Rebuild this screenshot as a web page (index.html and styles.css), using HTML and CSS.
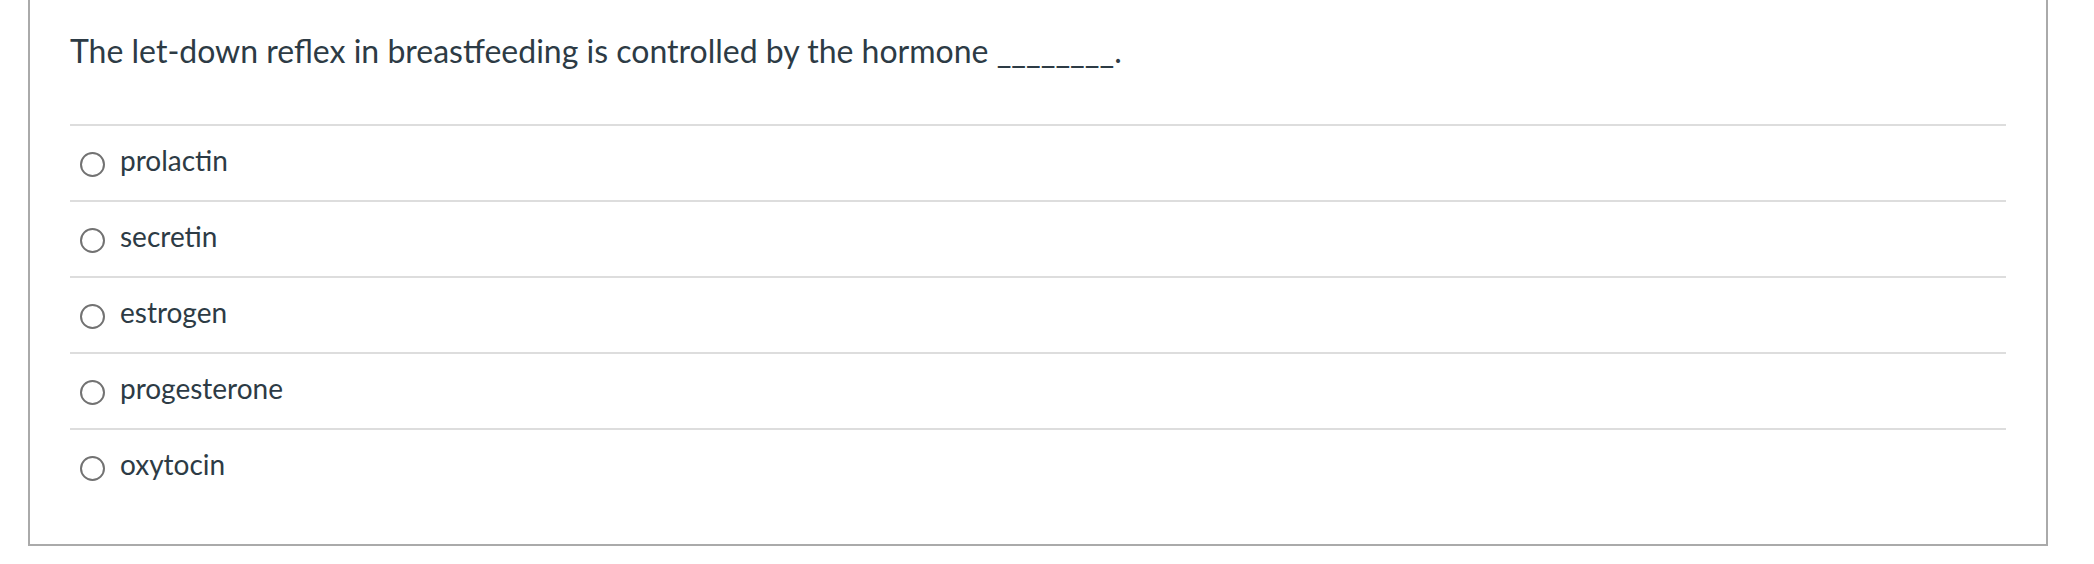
FILE: index.html
```html
<!DOCTYPE html>
<html lang="en">
<head>
<meta charset="utf-8">
<title>Quiz question</title>
<link rel="stylesheet" href="styles.css">
</head>
<body>
<div class="question-box">
  <div class="question-text">The let-down reflex in breastfeeding is controlled by the hormone ________.</div>
  <div class="answers">
    <label class="answer"><span class="radio"></span><span class="answer-text">prolactin</span></label>
    <label class="answer"><span class="radio"></span><span class="answer-text">secretin</span></label>
    <label class="answer"><span class="radio"></span><span class="answer-text">estrogen</span></label>
    <label class="answer"><span class="radio"></span><span class="answer-text">progesterone</span></label>
    <label class="answer"><span class="radio"></span><span class="answer-text">oxytocin</span></label>
  </div>
</div>
</body>
</html>
```

FILE: styles.css
```css
html, body {
  margin: 0;
  padding: 0;
  background: #ffffff;
}

body {
  font-family: Lato, "Noto Sans", sans-serif;
  color: #2d3b45;
}

.question-box {
  margin-left: 28px;
  width: 2020px;
  box-sizing: border-box;
  border: 2px solid #aaaaaa;
  border-top: none;
  padding: 32px 40px 40px 40px;
}

.question-text {
  font-size: 32px;
  line-height: 38px;
  margin-bottom: 54px;
}

.answers {
  display: flex;
  flex-direction: column;
}

.answer {
  display: flex;
  align-items: center;
  height: 74px;
  border-top: 2px solid #dddddd;
  padding-left: 10px;
  gap: 15px;
}

.radio {
  width: 25px;
  height: 25px;
  box-sizing: border-box;
  border: 2px solid #727272;
  border-radius: 50%;
  flex: none;
  margin-top: 3px;
}

.answer-text {
  font-size: 28px;
  line-height: 32px;
  padding-bottom: 6px;
}
```
